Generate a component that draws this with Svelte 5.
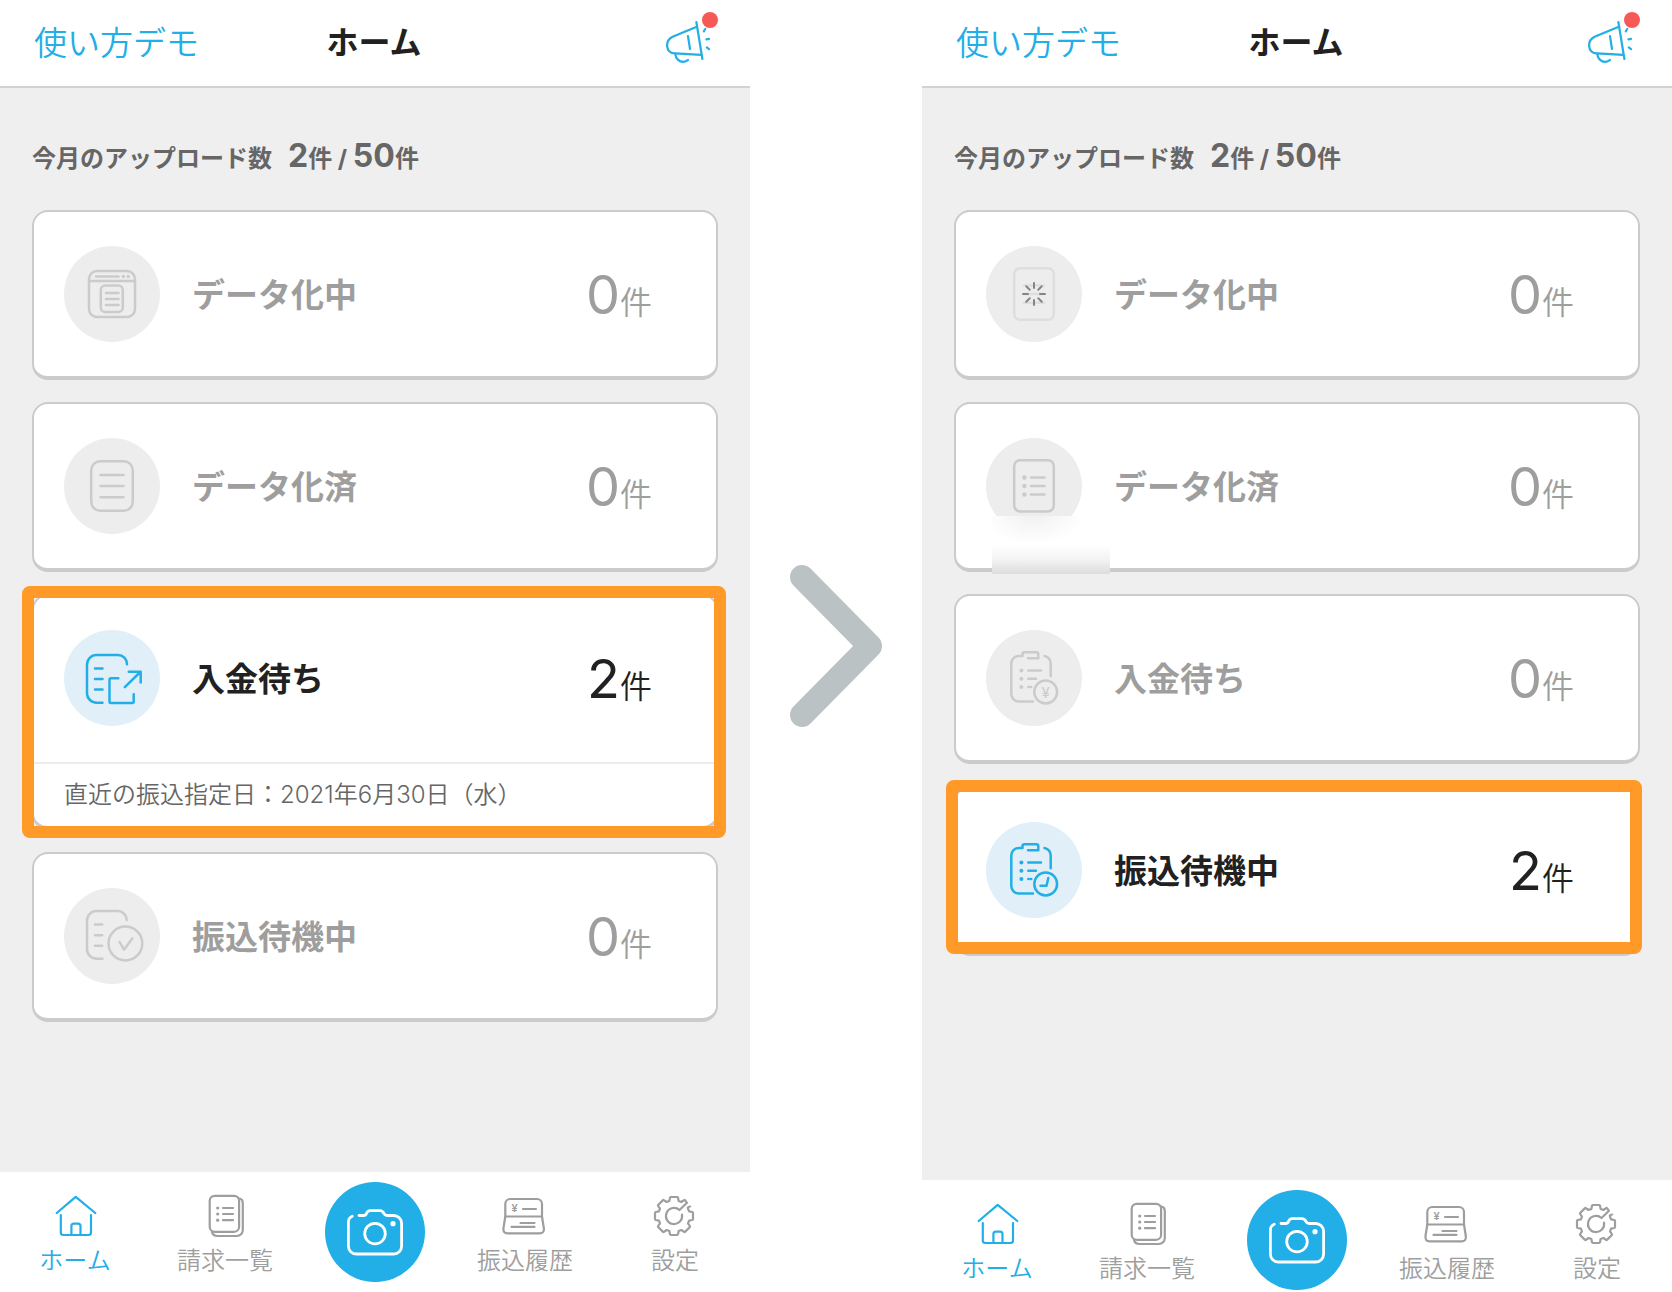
<script>
    const screens = [
        {
            id: 'before',
            cards: [
                { icon: 'window', label: 'データ化中', count: 0 },
                { icon: 'document', label: 'データ化済', count: 0 },
                { icon: 'export', label: '入金待ち', count: 2, active: true, note: '直近の振込指定日：2021年6月30日（水）' },
                { icon: 'check', label: '振込待機中', count: 0 },
            ],
        },
        {
            id: 'after',
            cards: [
                { icon: 'loading', label: 'データ化中', count: 0 },
                { icon: 'list', label: 'データ化済', count: 0, smudge: true },
                { icon: 'yen', label: '入金待ち', count: 0 },
                { icon: 'clock', label: '振込待機中', count: 2, active: true },
            ],
        },
    ];

    const spokes = [0, 45, 90, 135, 180, 225, 270, 315];
</script>

{#snippet cardIcon(name)}
    <svg class="card-icon" viewBox="0 0 96 96" aria-hidden="true">
        {#if name === 'window'}
            <rect x="25" y="25" width="46" height="46" rx="8" />
            <path d="M25 35H71M32 30.4H54.5" />
            <circle class="dot" cx="59.3" cy="30.4" r="1.7" />
            <circle class="dot" cx="64.2" cy="30.4" r="1.7" />
            <rect x="36.8" y="39.5" width="22" height="26.5" rx="4.5" />
            <path d="M42 47H54.5M42 53H54.5M42 59H54.5" />
        {:else if name === 'document'}
            <rect x="27.2" y="23.2" width="41.6" height="49.6" rx="9" />
            <path d="M36.5 37H59.5M36.5 48H59.5M36.5 59.3H59.5" />
        {:else if name === 'export'}
            <path d="M63 34.3V34a9 9 0 0 0-9-9H32.5a9.5 9.5 0 0 0-9.5 9.5V63.2a9.5 9.5 0 0 0 9.5 9.5H38.5" />
            <path d="M31 38.5H38.5M31 49H38.5M31 59.5H38.5" />
            <path d="M54.3 48.3H47a1.5 1.5 0 0 0-1.5 1.5V71.5a1.5 1.5 0 0 0 1.5 1.5H68.2a1.5 1.5 0 0 0 1.5-1.5V64.3" />
            <path d="M60.8 57.2L76.3 42M64.8 41.7H76.7V52.5" />
        {:else if name === 'check'}
            <path d="M62.7 32V32a9 9 0 0 0-9-9H32.5a9.5 9.5 0 0 0-9.5 9.5V61.2a9.5 9.5 0 0 0 9.5 9.5H38.5" />
            <path d="M31 36.5H38.2M31 47.2H38.2M31 57.8H38.2" />
            <circle cx="61.4" cy="55.5" r="16.9" />
            <path d="M55.6 54L60 61.7L68.4 50.2" />
        {:else if name === 'loading'}
            <g class="faint">
                <rect x="28.2" y="22.2" width="39.6" height="51.6" rx="6" />
                <path d="M38 39.5H58M38 48H58M38 56.7H58" />
            </g>
            <g class="spinner">
                {#each spokes as angle}
                    <path d="M48 42V37" transform="rotate({angle} 48 48)" />
                {/each}
            </g>
        {:else if name === 'list'}
            <rect x="28.2" y="22.2" width="39.6" height="51.3" rx="6" />
            <path d="M45 39.5H58.5M45 48H58.5M45 56.5H58.5" />
            <circle class="dot" cx="38.4" cy="39.5" r="2.2" />
            <circle class="dot" cx="38.4" cy="48" r="2.2" />
            <circle class="dot" cx="38.4" cy="56.5" r="2.2" />
        {:else}
            <path d="M47 71.5H32.8a7.5 7.5 0 0 1-7.5-7.5V33.5a7.5 7.5 0 0 1 7.5-7.5H36.5V24.3a2 2 0 0 1 2-2H50.3a2 2 0 0 1 2 2V28.2H42" />
            <path d="M58.5 26a8 8 0 0 1 6.2 7.5V46.3" />
            <path d="M42.3 40.4H55M42.3 48.7H50M42.3 57H42.8M45 57H45.3" />
            <circle cx="59.7" cy="62" r="11.4" />
            <circle class="dot" cx="35.4" cy="40.4" r="2" />
            <circle class="dot" cx="35.4" cy="48.7" r="2" />
            <circle class="dot" cx="35.4" cy="57" r="2" />
            {#if name === 'yen'}
                <text class="regular" x="59.7" y="68" font-size="15">¥</text>
            {:else}
                <path d="M62.3 56L60.5 63.7H54.5" />
            {/if}
        {/if}
    </svg>
{/snippet}

{#snippet screen(data)}
    <section class="screen {data.id}">
        <header>
            <a class="demo" href="#demo">使い方デモ</a>
            <h1>ホーム</h1>
            <button class="news" aria-label="お知らせ">
                <svg viewBox="106 21 50 44" aria-hidden="true">
                    <path d="M138.4 22.2L144.4 59M138.8 26.8L114.6 36.8C106.5 41 107.5 53 117 53.3L143.3 54.8" />
                    <path d="M130 36.2L132 49M117.3 54.2C117.8 58.5 121 61.8 125.2 61.8Q128.2 61.8 130 60" />
                    <path d="M145.8 31.3L147.3 29M148.4 39.4L151 38.9M148.8 47.4L151 49.2" />
                </svg>
                <span class="badge"></span>
            </button>
        </header>

        <main>
            <p class="usage">今月のアップロード数<span class="amount"><b>2</b>件 / <b>50</b>件</span></p>

            <div class="cards">
                {#each data.cards as card}
                    <div class="slot">
                        <button class="card" class:active={card.active}>
                            <span class="row">
                                {@render cardIcon(card.icon)}
                                <span class="label">{card.label}</span>
                                <span class="count">{card.count}<small>件</small></span>
                            </span>
                            {#if card.note}
                                <span class="note">{card.note}</span>
                            {/if}
                        </button>
                        {#if card.active}
                            <span class="frame"></span>
                        {/if}
                        {#if card.smudge}
                            <span class="smudge"></span>
                        {/if}
                    </div>
                {/each}
            </div>
        </main>

        <nav>
            <a class="current" href="#home">
                <svg viewBox="0 0 48 48" aria-hidden="true">
                    <path d="M5.7 21L24.7 4.8L44.3 21" />
                    <path d="M9.8 23V40.5a2.5 2.5 0 0 0 2.5 2.5H37.5a2.5 2.5 0 0 0 2.5-2.5V23" />
                    <path d="M20.4 43V34.2a2.5 2.5 0 0 1 2.5-2.5H27a2.5 2.5 0 0 1 2.5 2.5V43" />
                </svg>
                ホーム
            </a>
            <a href="#invoices">
                <svg viewBox="0 0 48 48" aria-hidden="true">
                    <rect x="8.7" y="3.8" width="29.4" height="36" rx="5" />
                    <path d="M38.5 6.5C41 7 41.8 8.5 41.8 11V38a6 6 0 0 1-6 6H17C13.5 44 11.5 43 11 40" />
                    <path d="M22 16H32M22 22H32M22 28.2H32" />
                    <circle class="dot" cx="16.7" cy="16" r="1.6" />
                    <circle class="dot" cx="16.7" cy="22" r="1.6" />
                    <circle class="dot" cx="16.7" cy="28.2" r="1.6" />
                </svg>
                請求一覧
            </a>
            <button class="camera" aria-label="撮影">
                <svg viewBox="0 0 100 100" aria-hidden="true">
                    <path d="M27.3 34.2C25 35.2 23.4 37 23.4 40V64a8 8 0 0 0 8 8H68.6a8 8 0 0 0 8-8V41.5a8 8 0 0 0-8-8H62C60 33.5 59.5 32.5 59 31.5C58 29.5 57 28.7 55 28.7H45C43 28.7 42.3 29.5 41.5 31.5C41 33 40.5 33.5 38.5 33.5H34" />
                    <circle cx="50" cy="51.6" r="10.3" />
                    <circle class="dot" cx="68" cy="41.7" r="2.6" />
                </svg>
            </button>
            <a href="#history">
                <svg viewBox="0 0 48 48" aria-hidden="true">
                    <path d="M4.3 24.5V12a5 5 0 0 1 5-5H36a5 5 0 0 1 5 5V24.5Z" />
                    <path d="M4.3 24.5L2.5 36C2 39.5 3.5 41.3 6.5 41.3H39C42 41.3 43.3 39.5 42.8 36L41 24.5" />
                    <path d="M22 17H35M19.5 31H33.5M10.5 34.8H33.5" />
                    <text x="13.7" y="20" font-size="11">¥</text>
                </svg>
                振込履歴
            </a>
            <a href="#settings">
                <svg viewBox="-23 -24 48 48" aria-hidden="true">
                    <path d="M16.2-9.5Q13-9 14-7.4L15.1-4.6L18.3-4Q19-3.8 19-3V3Q19 3.8 18.3 4L15.1 4.6L14 7.4L15.9 10.1Q16.2 10.5 15.9 11L11 15.9Q10.5 16.2 10.1 15.9L7.4 14L4.6 15.1L4 18.3Q3.8 19 3 19H-3Q-3.8 19-4 18.3L-4.6 15.1L-7.4 14L-10.1 15.9Q-10.5 16.2-11 15.9L-15.9 11Q-16.2 10.5-15.9 10.1L-14 7.4L-15.1 4.6L-18.3 4Q-19 3.8-19 3V-3Q-19-3.8-18.3-4L-15.1-4.6L-14-7.4L-15.9-10.1Q-16.2-10.5-15.9-11L-11-15.9Q-10.5-16.2-10.1-15.9L-7.4-14L-4.6-15.1L-4-18.3Q-3.8-19-3-19H3Q3.8-19 4-18.3L4.6-15.1L7.4-14L10.1-15.9Q10.5-16.2 11-15.9L13-13.2L5.5-6A8.1 8.1 0 1 0 8-1.5" />
                </svg>
                設定
            </a>
        </nav>
    </section>
{/snippet}

<div class="page">
    {@render screen(screens[0])}
    <div class="arrow">
        <svg viewBox="0 0 92 162" aria-hidden="true">
            <path d="M12 12L80 81L12 150" />
        </svg>
    </div>
    {@render screen(screens[1])}
</div>

<style>
    :global(body) {
        margin: 0;
        background: #fff;
    }
    .page {
        display: grid;
        grid-template-columns: 1fr 172px 1fr;
        min-height: 100vh;
        font-family: "Inter", "Noto Sans CJK JP", sans-serif;
        color: #212121;
    }
    .screen {
        display: flex;
        flex-direction: column;
        background: #efefef;
    }
    button {
        font: inherit;
        color: inherit;
        border: none;
        padding: 0;
        background: none;
        cursor: pointer;
    }
    a {
        color: inherit;
        text-decoration: none;
    }
    svg {
        display: block;
        fill: none;
        stroke: currentColor;
        stroke-width: 2.2;
        stroke-linecap: round;
        stroke-linejoin: round;
    }
    .dot {
        fill: currentColor;
        stroke: none;
    }
    svg text {
        fill: currentColor;
        stroke: none;
        text-anchor: middle;
        font-weight: 600;
    }
    svg .regular {
        font-weight: 400;
    }

    header {
        display: grid;
        grid-template-columns: 1fr auto 1fr;
        align-items: center;
        height: 86px;
        padding: 0 36px 0 34px;
        background: #fff;
        border-bottom: 2px solid #d2d2d2;
    }
    .demo {
        padding-bottom: 4px;
        font-size: 33px;
        font-weight: 350;
        color: #22aee6;
    }
    h1 {
        margin: 0;
        padding-bottom: 6px;
        font-size: 32px;
        font-weight: 700;
    }
    .news {
        position: relative;
        justify-self: end;
        color: #22aee6;
    }
    .news svg {
        width: 50px;
        height: 44px;
    }
    .badge {
        position: absolute;
        top: -9px;
        right: -4px;
        width: 16px;
        height: 16px;
        border-radius: 50%;
        background: #f75a56;
    }

    main {
        flex: 1;
        padding: 48px 32px;
    }
    .usage {
        height: 40px;
        margin: 0 0 34px;
        font-size: 24px;
        line-height: 40px;
        font-weight: 700;
        color: #666;
    }
    .usage b {
        font-size: 32px;
        font-weight: 700;
    }
    .amount {
        margin-left: 16px;
    }
    .cards {
        display: flex;
        flex-direction: column;
        gap: 22px;
    }
    .slot {
        position: relative;
    }
    .card {
        display: block;
        box-sizing: border-box;
        width: 100%;
        border: 2px solid #cbcbcb;
        border-bottom-width: 4px;
        border-radius: 16px;
        background: #fff;
        color: #9e9e9e;
        text-align: left;
    }
    .row {
        display: flex;
        align-items: center;
        padding: 34px 64px 34px 30px;
    }
    .card-icon {
        width: 96px;
        height: 96px;
        border-radius: 50%;
        background: #ededed;
        color: #cbcbcb;
        stroke-width: 2.5;
    }
    .faint {
        stroke: #dedede;
    }
    .spinner {
        stroke: #858585;
        stroke-width: 2;
    }
    .label {
        flex: 1;
        margin-left: 32px;
        padding-bottom: 2px;
        font-size: 33px;
        font-weight: 700;
    }
    .count {
        padding-top: 10px;
        font-size: 54px;
        line-height: 64px;
    }
    .count small {
        font-size: 32px;
        font-weight: 350;
    }
    .active {
        color: #212121;
    }
    .active .card-icon {
        background: #e1eff9;
        color: #22aee6;
    }
    .note {
        display: block;
        margin-top: 2px;
        padding: 0 30px;
        border-top: 2px solid #ededed;
        font-size: 24px;
        font-weight: 350;
        line-height: 62px;
        color: #666;
    }
    .frame {
        position: absolute;
        inset: -8px -8px -8px -10px;
        border: 12px solid #ff9927;
        border-radius: 8px;
        pointer-events: none;
    }
    .after .frame {
        inset: -6px -2px 2px -8px;
    }
    .smudge {
        position: absolute;
        left: 38px;
        bottom: -2px;
        width: 118px;
        height: 58px;
        background:
            radial-gradient(ellipse 50px 28px at 42px 0, #f1f1f1, rgba(255, 255, 255, 0)),
            linear-gradient(#fff 50%, #f3f3f3 75%, #dcdcdc);
        pointer-events: none;
    }

    nav {
        display: grid;
        grid-template-columns: repeat(5, 1fr);
        padding: 10px 0;
        background: #fff;
        color: #9e9e9e;
    }
    .after nav {
        padding-bottom: 2px;
    }
    nav a {
        display: flex;
        flex-direction: column;
        align-items: center;
        padding-top: 10px;
        font-size: 24px;
        font-weight: 350;
        line-height: 42px;
    }
    nav a svg {
        width: 48px;
        height: 48px;
    }
    .current {
        color: #22aee6;
    }
    .camera {
        justify-self: center;
        width: 100px;
        height: 100px;
        border-radius: 50%;
        background: #22aee6;
        color: #fff;
    }
    .camera svg {
        stroke-width: 2.8;
    }

    .arrow {
        display: flex;
        align-items: center;
        justify-content: center;
        color: #bbc2c4;
    }
    .arrow svg {
        width: 92px;
        height: 162px;
        stroke-width: 24;
    }
</style>
